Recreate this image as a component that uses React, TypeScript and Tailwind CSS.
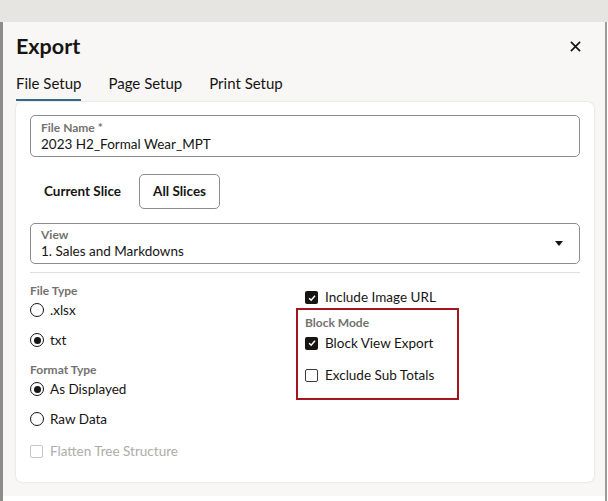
import React from "react";

const ink = "text-[#161513]";

const Radio = ({ checked, label }: { checked?: boolean; label: string }) => (
  <div className="flex h-[22px] items-center gap-[6px]">
    <span className="flex h-[14px] w-[14px] items-center justify-center rounded-full border-[1.5px] border-[#161513] bg-white">
      {checked && <span className="h-[7px] w-[7px] rounded-full bg-[#161513]" />}
    </span>
    <span className={`text-[13.5px] ${ink}`}>{label}</span>
  </div>
);

const Check = ({
  checked,
  disabled,
  label,
  className = "",
}: {
  checked?: boolean;
  disabled?: boolean;
  label: string;
  className?: string;
}) => (
  <div className={`flex items-center gap-[7px] ${className}`}>
    {checked ? (
      <span className="flex h-[13px] w-[13px] items-center justify-center rounded-[2px] bg-[#161513]">
        <svg viewBox="0 0 12 12" className="h-[10px] w-[10px]">
          <path d="M2.5 6.3 L5 8.6 L9.6 3.4" fill="none" stroke="white" strokeWidth="1.8" />
        </svg>
      </span>
    ) : (
      <span
        className={`h-[13px] w-[13px] rounded-[2px] border-[1.5px] bg-white ${
          disabled ? "border-[#c9c7c4]" : "border-[#3d3b39]"
        }`}
      />
    )}
    <span className={`text-[13.5px] ${disabled ? "text-[#aeaca9]" : ink}`}>{label}</span>
  </div>
);

const Label = ({ children, className = "" }: { children: React.ReactNode; className?: string }) => (
  <div className={`h-[16px] text-[12px] leading-[16px] font-bold text-[#74726f] ${className}`}>{children}</div>
);

export default function App() {
  return (
    <div
      className="flex h-[501px] w-[608px] flex-col overflow-hidden bg-white"
      style={{ fontFamily: "Lato, 'Open Sans', sans-serif" }}
    >
      {/* blurred page behind the dialog */}
      <div className="h-[22px] shrink-0 bg-[#e7e5e2]" />

      <div className="flex flex-1">
        <div className="w-[3px] bg-[#8e8c88]" />

        {/* Dialog */}
        <div className="flex h-[474px] w-[602px] flex-col bg-[#f8f7f5] pl-[13px] pr-[11px]">
          {/* Header */}
          <div className="mt-[10px] flex h-[28px] items-center justify-between">
            <h1 className={`text-[21.5px] leading-[28px] font-bold ${ink}`}>Export</h1>
            <svg viewBox="0 0 12 12" className="mr-[13px] h-[11px] w-[11px]">
              <path d="M1 1 L11 11 M11 1 L1 11" stroke="#161513" strokeWidth="1.8" />
            </svg>
          </div>

          {/* Tabs */}
          <div className="mt-[13px] flex gap-[27px]">
            <div className={`border-b-2 border-[#2e6c8a] pb-[6px] text-[15px] leading-[20px] ${ink}`}>File Setup</div>
            <div className={`pb-[6px] text-[15px] leading-[20px] ${ink}`}>Page Setup</div>
            <div className={`pb-[6px] text-[15px] leading-[20px] ${ink}`}>Print Setup</div>
          </div>

          {/* Panel */}
          <div className="mt-[1px] flex h-[380px] flex-col rounded-[6px] bg-white px-[14px] pt-[13px] shadow-[0_0_2px_rgba(0,0,0,0.18)]">
            {/* File name */}
            <div className="flex h-[42px] flex-col justify-center rounded-[5px] border border-[#8e8c8a] pl-[10px]">
              <Label>File Name *</Label>
              <div className={`text-[13.5px] leading-[17px] ${ink}`}>2023 H2_Formal Wear_MPT</div>
            </div>

            {/* Slice toggle */}
            <div className="mt-[17px] flex h-[35px] gap-[4px]">
              <div className={`flex items-center px-[14px] text-[13.5px] font-bold ${ink}`}>Current Slice</div>
              <div className={`flex items-center rounded-[5px] border border-[#8e8c8a] px-[13px] text-[13.5px] font-bold ${ink}`}>
                All Slices
              </div>
            </div>

            {/* View select */}
            <div className="mt-[14px] flex h-[41px] items-center justify-between rounded-[5px] border border-[#8e8c8a] pl-[10px] pr-[16px]">
              <div className="flex flex-col">
                <Label>View</Label>
                <div className={`text-[13.5px] leading-[17px] ${ink}`}>1. Sales and Markdowns</div>
              </div>
              <svg viewBox="0 0 8 5" className="h-[5px] w-[8px]">
                <path d="M0 0 H8 L4 5 Z" fill="#161513" />
              </svg>
            </div>

            <div className="mt-[8px] h-px bg-[#e2e0dd]" />

            {/* Options */}
            <div className="grid grid-cols-[266px_1fr]">
              <div className="flex flex-col pt-[10px]">
                <Label>File Type</Label>
                <Radio label=".xlsx" />
                <div className="mt-[8px]">
                  <Radio checked label="txt" />
                </div>
                <Label className="mt-[11px]">Format Type</Label>
                <Radio checked label="As Displayed" />
                <div className="mt-[8px]">
                  <Radio label="Raw Data" />
                </div>
                <Check disabled label="Flatten Tree Structure" className="mt-[10px] h-[22px]" />
              </div>

              <div className="flex flex-col pt-[14px]">
                <Check checked label="Include Image URL" className="h-[21px] pl-[9px]" />
                <div className="w-[163px] border-2 border-[#a5161c] pl-[7px] pt-[5px] pb-[12px]">
                  <Label>Block Mode</Label>
                  <Check checked label="Block View Export" className="mt-[1px] h-[22px]" />
                  <Check label="Exclude Sub Totals" className="mt-[10px] h-[22px]" />
                </div>
              </div>
            </div>
          </div>
        </div>

        <div className="w-[2px] bg-[#9d9b98]" />
      </div>
    </div>
  );
}
